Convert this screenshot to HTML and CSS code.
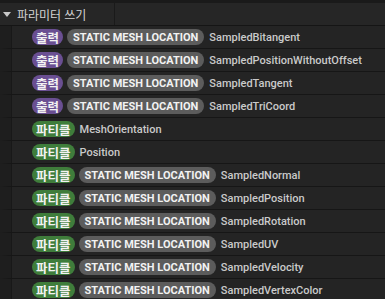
FILE: index.html
```html
<!DOCTYPE html>
<html lang="ko">

<head>
    <meta charset="UTF-8">
    <title>파라미터 쓰기</title>
    <link rel="stylesheet" href="styles.css">
</head>

<body>
    <div class="panel">
        <div class="header">
            <div class="header-title">
                <span class="arrow"></span>
                <span>파라미터 쓰기</span>
            </div>
            <div class="header-rest"></div>
        </div>

        <div class="row">
            <span class="tag tag-output">출력</span>
            <span class="tag tag-gray">STATIC MESH LOCATION</span>
            <span class="name">SampledBitangent</span>
        </div>
        <div class="row">
            <span class="tag tag-output">출력</span>
            <span class="tag tag-gray">STATIC MESH LOCATION</span>
            <span class="name">SampledPositionWithoutOffset</span>
        </div>
        <div class="row">
            <span class="tag tag-output">출력</span>
            <span class="tag tag-gray">STATIC MESH LOCATION</span>
            <span class="name">SampledTangent</span>
        </div>
        <div class="row">
            <span class="tag tag-output">출력</span>
            <span class="tag tag-gray">STATIC MESH LOCATION</span>
            <span class="name">SampledTriCoord</span>
        </div>
        <div class="row">
            <span class="tag tag-particle">파티클</span>
            <span class="name">MeshOrientation</span>
        </div>
        <div class="row">
            <span class="tag tag-particle">파티클</span>
            <span class="name">Position</span>
        </div>
        <div class="row">
            <span class="tag tag-particle">파티클</span>
            <span class="tag tag-gray">STATIC MESH LOCATION</span>
            <span class="name">SampledNormal</span>
        </div>
        <div class="row">
            <span class="tag tag-particle">파티클</span>
            <span class="tag tag-gray">STATIC MESH LOCATION</span>
            <span class="name">SampledPosition</span>
        </div>
        <div class="row">
            <span class="tag tag-particle">파티클</span>
            <span class="tag tag-gray">STATIC MESH LOCATION</span>
            <span class="name">SampledRotation</span>
        </div>
        <div class="row">
            <span class="tag tag-particle">파티클</span>
            <span class="tag tag-gray">STATIC MESH LOCATION</span>
            <span class="name">SampledUV</span>
        </div>
        <div class="row">
            <span class="tag tag-particle">파티클</span>
            <span class="tag tag-gray">STATIC MESH LOCATION</span>
            <span class="name">SampledVelocity</span>
        </div>
        <div class="row">
            <span class="tag tag-particle">파티클</span>
            <span class="tag tag-gray">STATIC MESH LOCATION</span>
            <span class="name">SampledVertexColor</span>
        </div>
    </div>
</body>

</html>
```

FILE: styles.css
```css
body {
    margin: 0;
    padding: 0;
    background-color: #242424;
    font-family: Roboto, "Noto Sans CJK KR", sans-serif;
    overflow: hidden;
}

.panel {
    width: 385px;
}

.header {
    display: flex;
    height: 22px;
    border-top: 3px solid #1a1a1a;
    border-bottom: 1px solid #151515;
    background-color: #262626;
}

.header-title {
    display: flex;
    align-items: center;
    gap: 6px;
    width: 111px;
    padding-left: 3px;
    border-right: 1px solid #1a1a1a;
    color: #d4d4d4;
    font-size: 12px;
}

.arrow {
    width: 0;
    height: 0;
    border-left: 4px solid transparent;
    border-right: 4px solid transparent;
    border-top: 5px solid #c8c8c8;
}

.header-rest {
    flex: 1;
}

.row {
    display: flex;
    align-items: center;
    gap: 4px;
    height: 22px;
    padding-left: 21px;
    border-left: 11px solid #1e1e1e;
    border-bottom: 1px solid #161616;
    box-shadow: inset 1px 0 0 #181818;
}

.tag {
    display: inline-flex;
    align-items: center;
    height: 16px;
    padding: 0 6px;
    border-radius: 8px;
    color: #f2f2f2;
    font-size: 11px;
    font-weight: bold;
    white-space: nowrap;
}

.tag-output,
.tag-particle {
    padding: 0 4px;
    font-size: 12.5px;
}

.tag-output {
    background-color: #6a4f92;
}

.tag-particle {
    background-color: #3f7d3b;
}

.tag-gray {
    background-color: #5c5c5c;
}

.name {
    margin-left: 1px;
    color: #cacaca;
    font-size: 11px;
    font-weight: 500;
    white-space: nowrap;
}
```
